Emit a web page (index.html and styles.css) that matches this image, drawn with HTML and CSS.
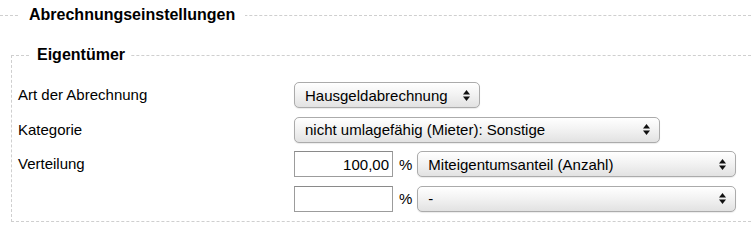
FILE: index.html
```html
<!DOCTYPE html>
<html lang="de">
<head>
<meta charset="utf-8">
<title>Abrechnungseinstellungen</title>
<link rel="stylesheet" href="styles.css">
</head>
<body>
<fieldset class="outer">
  <legend class="outer-legend">Abrechnungseinstellungen</legend>
  <fieldset class="inner">
    <legend class="inner-legend">Eigentümer</legend>
    <div class="form-grid">
      <label class="lbl">Art der Abrechnung</label>
      <div class="ctrl">
        <select class="sel sel-art"><option>Hausgeldabrechnung</option></select>
      </div>
      <label class="lbl">Kategorie</label>
      <div class="ctrl">
        <select class="sel sel-kat"><option>nicht umlagefähig (Mieter): Sonstige</option></select>
      </div>
      <label class="lbl">Verteilung</label>
      <div class="ctrl">
        <input class="num" type="text" value="100,00">
        <span class="pct">%</span>
        <select class="sel sel-vert"><option>Miteigentumsanteil (Anzahl)</option></select>
      </div>
      <span class="lbl"></span>
      <div class="ctrl">
        <input class="num" type="text" value="">
        <span class="pct">%</span>
        <select class="sel sel-vert"><option>-</option></select>
      </div>
    </div>
  </fieldset>
</fieldset>
</body>
</html>
```
FILE: styles.css
```css
html, body {
  margin: 0;
  padding: 0;
  overflow: hidden;
  background: #fff;
}
body {
  font-family: "Liberation Sans", Arial, Helvetica, sans-serif;
  font-size: 15px;
  color: #000;
  padding-top: 6px;
}
.outer {
  margin: 0;
  padding: 0;
  border: 0;
  border-top: 1px dashed #cfcfcf;
  min-width: 0;
}
.outer-legend {
  margin-left: 19px;
  padding: 0 10px;
  font-size: 16px;
  font-weight: bold;
  line-height: 18px;
}
.inner {
  margin: 22px 0 0 11px;
  padding: 0 6px 9px 6px;
  border: 1px dashed #cfcfcf;
  border-right: 0;
  min-width: 0;
}
.inner-legend {
  margin-left: 13px;
  padding: 0 6px;
  font-size: 16px;
  font-weight: bold;
  line-height: 18px;
}
.form-grid {
  display: grid;
  grid-template-columns: 276px 1fr;
  row-gap: 8.5px;
  align-items: center;
  padding-top: 18px;
}
.lbl {
  font-size: 15px;
  line-height: 18px;
}
.ctrl {
  display: flex;
  align-items: center;
  height: 26px;
}
.sel {
  -webkit-appearance: none;
  appearance: none;
  height: 26px;
  margin: 0;
  padding: 0 24px 0 10px;
  font-family: "Liberation Sans", Arial, Helvetica, sans-serif;
  font-size: 15px;
  color: #000;
  border: 1px solid #ababab;
  border-radius: 5px;
  background-color: #f0f0f0;
  background-image:
    url("data:image/svg+xml;utf8,<svg xmlns='http://www.w3.org/2000/svg' width='7' height='11' viewBox='0 0 7 11'><polygon points='3.5,0 7,4.5 0,4.5' fill='%23111'/><polygon points='0,6.5 7,6.5 3.5,11' fill='%23111'/></svg>"),
    linear-gradient(#ffffff, #f3f3f3 45%, #e2e2e2);
  background-repeat: no-repeat, no-repeat;
  background-position: right 9px center, 0 0;
  background-size: 7px 11px, 100% 100%;
  box-shadow: 0 1px 1px rgba(0,0,0,0.08);
}
.sel-art { width: 186px; }
.sel-kat { width: 366px; }
.sel-vert { width: 319px; }
.num {
  box-sizing: border-box;
  width: 99px;
  height: 26px;
  margin: 0;
  padding: 0 3px 0 4px;
  font-family: "Liberation Sans", Arial, Helvetica, sans-serif;
  font-size: 15px;
  color: #000;
  text-align: right;
  border: 1px solid #9c9c9c;
  border-top-color: #8a8a8a;
  background: #fff;
  outline: none;
}
.pct {
  margin: 0 5px 0 6px;
  font-size: 15px;
}
```
